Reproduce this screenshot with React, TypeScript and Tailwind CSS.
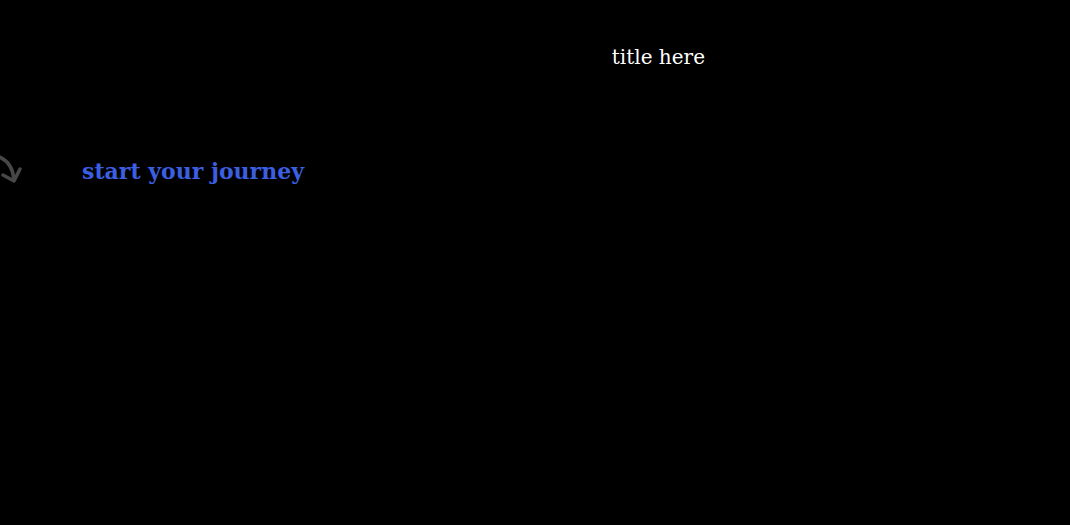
import React from "react";

export default function App() {
  return (
    <div className="w-[1070px] h-[525px] bg-black overflow-hidden relative" style={{ fontFamily: "Georgia, 'DejaVu Serif', serif" }}>
      <div className="flex justify-end pt-[43px] pr-[365px]">
        <h1 className="text-white text-[20px] leading-[28px] font-normal">title here</h1>
      </div>
      <div className="flex items-start mt-[82px]">
        <svg width="26" height="36" viewBox="0 0 26 36" className="-ml-[4px] mr-[60px] -mt-[3px]">
          <path d="M1 6 C 10 9, 17 16, 18 30" fill="none" stroke="#474747" strokeWidth="3.5" strokeLinecap="round" />
          <path d="M7 25 L18 31 L24 19" fill="none" stroke="#474747" strokeWidth="3.5" strokeLinecap="round" strokeLinejoin="round" />
        </svg>
        <span className="text-[#3b5fe0] text-[22px] font-bold leading-[30px] mt-[3px]">start your journey</span>
      </div>
    </div>
  );
}
